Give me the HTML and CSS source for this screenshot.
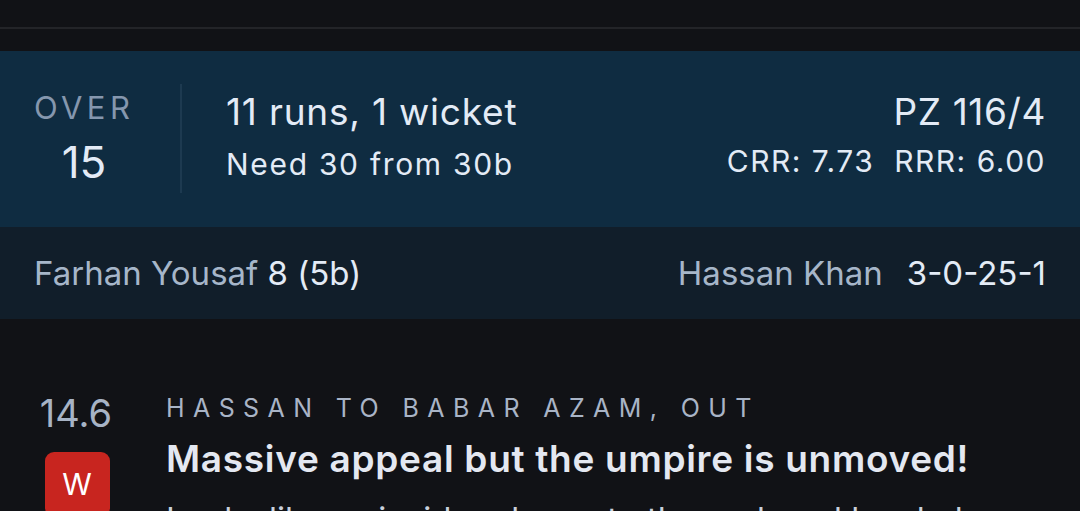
FILE: index.html
```html
<!DOCTYPE html>
<html>
<head>
<meta charset="utf-8">
<link rel="stylesheet" href="styles.css">
</head>
<body>
<div class="topbar"></div>
<div class="rule"></div>
<div class="gap"></div>
<section class="over-panel">
  <div class="over-col">
    <div class="over-label">OVER</div>
    <div class="over-num">15</div>
  </div>
  <div class="divider"></div>
  <div class="summary">
    <div class="sum-title">11 runs, 1 wicket</div>
    <div class="sum-sub">Need 30 from 30b</div>
  </div>
  <div class="score">
    <div class="score-main">PZ 116/4</div>
    <div class="score-rates">CRR: 7.73&nbsp;&nbsp;RRR: 6.00</div>
  </div>
</section>
<section class="players">
  <div class="batter"><span class="pname">Farhan Yousaf</span> <span class="pval">8 (5b)</span></div>
  <div class="bowler"><span class="pname">Hassan Khan</span><span class="pval fig">3-0-25-1</span></div>
</section>
<section class="ball">
  <div class="ball-col">
    <div class="ball-no">14.6</div>
    <div class="badge">W</div>
  </div>
  <div class="ball-body">
    <div class="ball-label">HASSAN TO BABAR AZAM, OUT</div>
    <div class="ball-head">Massive appeal but the umpire is unmoved!</div>
    <div class="ball-text">Looks like an inside edge onto the pad, and he shakes his head</div>
  </div>
</section>
</body>
</html>
```
FILE: styles.css
```css
html, body {
  margin: 0;
  padding: 0;
  background: #111216;
  font-family: Inter, "Noto Sans", sans-serif;
  overflow: hidden;
}
.topbar { height: 27px; }
.rule { height: 2px; background: #232428; }
.gap { height: 22px; }

.over-panel {
  height: 176px;
  background: #0f2c41;
  display: flex;
  align-items: flex-start;
  padding: 33px 34px 0;
  box-sizing: border-box;
}
.over-col {
  width: 100px;
  flex-shrink: 0;
  text-align: center;
  margin-top: 6px;
}
.over-label {
  font-size: 31px;
  letter-spacing: 4.4px;
  color: #8597ae;
  line-height: 36px;
  padding-left: 4px;
  margin-left: -4px;
}
.over-num {
  font-size: 44px;
  color: #e3ebf6;
  line-height: 50px;
  margin-top: 11px;
}
.divider {
  width: 2px;
  height: 109px;
  flex-shrink: 0;
  background: #1d3a50;
  margin: 0 44px 0 46px;
}
.summary {
  flex: 1;
  margin-top: 6px;
  color: #e3ebf6;
}
.sum-title {
  font-size: 37px;
  letter-spacing: 0.8px;
  line-height: 44px;
}
.sum-sub {
  font-size: 30px;
  letter-spacing: 1.7px;
  line-height: 40px;
  margin-top: 10px;
}
.score {
  text-align: right;
  margin-top: 6px;
  color: #e3ebf6;
}
.score-main {
  font-size: 37px;
  letter-spacing: 0.6px;
  line-height: 44px;
}
.score-rates {
  font-size: 30px;
  letter-spacing: 1.5px;
  line-height: 40px;
  margin-top: 7px;
}

.players {
  height: 92px;
  background: #111e2a;
  display: flex;
  align-items: center;
  justify-content: space-between;
  padding: 0 34px;
  box-sizing: border-box;
  font-size: 33px;
}
.pname { color: #a6b6c9; }
.pval { color: #e3ebf6; }
.fig { margin-left: 24px; }

.ball {
  display: flex;
  padding: 72px 34px 0 40px;
}
.ball-col {
  width: 72px;
  flex-shrink: 0;
  margin-right: 54px;
  display: flex;
  flex-direction: column;
  align-items: center;
}
.ball-no {
  font-size: 38px;
  color: #a7b3c5;
  line-height: 44px;
}
.badge {
  margin-top: 17px;
  margin-left: 2px;
  width: 65px;
  height: 65px;
  flex-shrink: 0;
  background: #c8251f;
  border-radius: 9px;
  color: #fff;
  font-size: 30px;
  text-align: center;
  line-height: 65px;
}
.ball-body {
  flex: 1;
  min-width: 0;
  padding-top: 1px;
}
.ball-label {
  font-size: 25px;
  letter-spacing: 8.4px;
  color: #a9b4c6;
  line-height: 32px;
  white-space: nowrap;
}
.ball-head {
  font-size: 37px;
  font-weight: 600;
  letter-spacing: 0.7px;
  color: #e4e8f1;
  line-height: 46px;
  margin-top: 12px;
  white-space: nowrap;
}
.ball-text {
  font-size: 33px;
  color: #c9d0dc;
  line-height: 50px;
  margin-top: 12px;
}
```
